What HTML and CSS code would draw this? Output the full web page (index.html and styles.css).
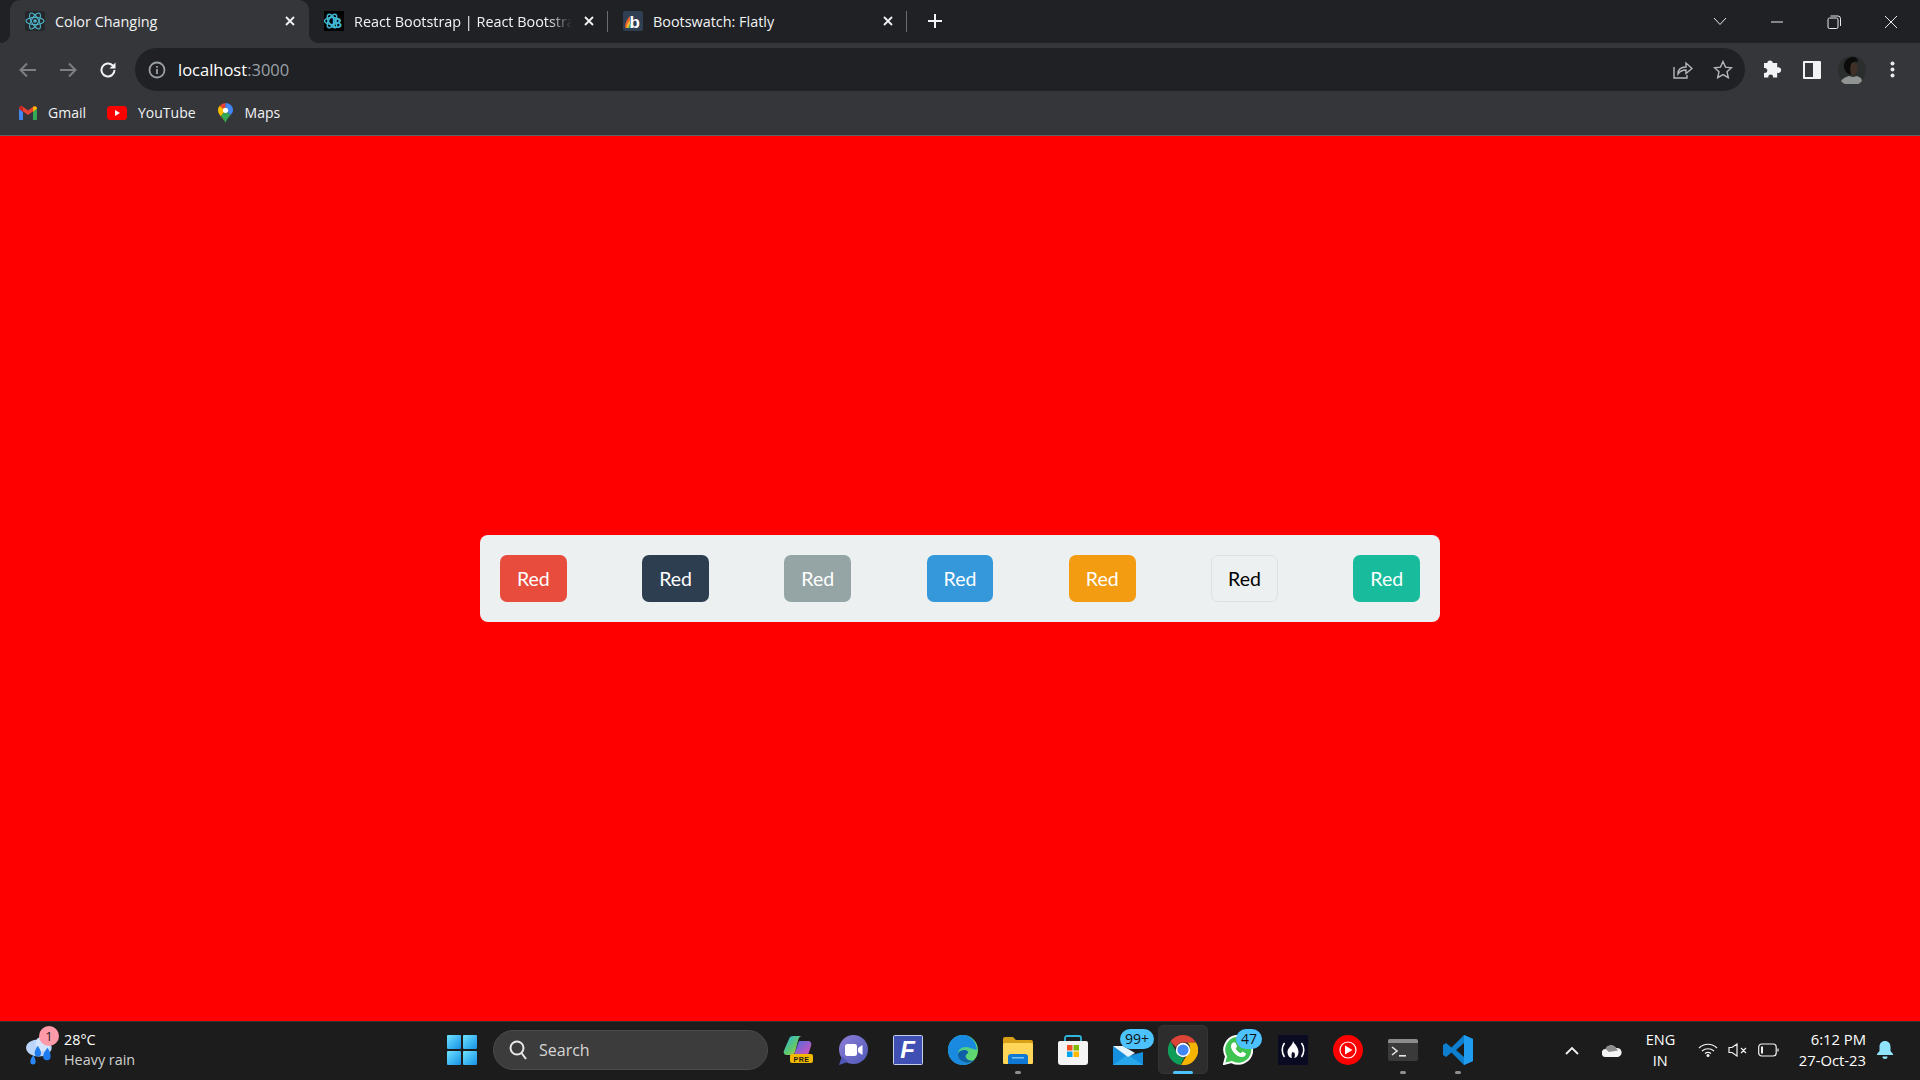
FILE: index.html
```html
<!DOCTYPE html>
<html>
<head>
<meta charset="utf-8">
<title>Color Changing</title>
<link rel="stylesheet" href="styles.css">
</head>
<body>

<!-- browser chrome -->
<header class="chrome">
  <div class="tabstrip">
    <div class="tab active">
      <svg class="favicon" viewBox="0 0 20 20"><rect width="20" height="20" rx="2" fill="#25282b"/><g fill="none" stroke="#4fb3c8" stroke-width="1.1"><ellipse cx="10" cy="10" rx="9" ry="3.6"/><ellipse cx="10" cy="10" rx="9" ry="3.6" transform="rotate(60 10 10)"/><ellipse cx="10" cy="10" rx="9" ry="3.6" transform="rotate(120 10 10)"/></g><circle cx="10" cy="10" r="1.8" fill="#4fb3c8"/></svg>
      <span class="tab-title">Color Changing</span>
      <svg class="tab-close" viewBox="0 0 10 10"><path d="M1 1l8 8M9 1l-8 8"/></svg>
    </div>
    <div class="tab sep">
      <svg class="favicon" viewBox="0 0 20 20"><rect width="20" height="20" fill="#000"/><g fill="none" stroke="#41b6d2" stroke-width="1.500"><ellipse cx="8" cy="10" rx="7.500" ry="3.400"/><ellipse cx="8" cy="10" rx="7.500" ry="3.400" transform="rotate(60 8 10)"/><ellipse cx="8" cy="10" rx="7.500" ry="3.400" transform="rotate(120 8 10)"/></g><text x="8" y="16.500" class="fav-b">B</text></svg>
      <span class="tab-title fade">React Bootstrap | React Bootstrap</span>
      <svg class="tab-close" viewBox="0 0 10 10"><path d="M1 1l8 8M9 1l-8 8"/></svg>
    </div>
    <div class="tab sep">
      <svg class="favicon" viewBox="0 0 20 20"><rect width="20" height="20" rx="2.500" fill="#2f4054"/><path d="M2 16c0-4 2-8 5-11v12H4c-1 0-2 0-2-1z" fill="#e8622c"/><path d="M3.500 17c0-3 1.500-6 3.500-8v8z" fill="#f2b632"/><path d="M5.500 17c0-2 1-3.500 2.500-4.500V17z" fill="#39a85c"/><text x="6.500" y="16.500" class="fav-bw">b</text></svg>
      <span class="tab-title">Bootswatch: Flatly</span>
      <svg class="tab-close" viewBox="0 0 10 10"><path d="M1 1l8 8M9 1l-8 8"/></svg>
    </div>
    <svg class="new-tab" viewBox="0 0 14 14"><path d="M7 0v14M0 7h14"/></svg>
    <div class="win-controls">
      <svg class="win-chevron" viewBox="0 0 14 9"><path d="M1 1l6 6.5L13 1"/></svg>
      <svg class="win-btn" viewBox="0 0 14 14"><path d="M1 7h12"/></svg>
      <svg class="win-btn" viewBox="0 0 14 14"><rect x="1" y="3" width="10" height="10.5" rx="1.5"/><path d="M3.5 1H11a2.500 2.500 0 0 1 2.500 2.500V11"/></svg>
      <svg class="win-btn" viewBox="0 0 14 14"><path d="M1 1l12 12M13 1L1 13"/></svg>
    </div>
  </div>

  <div class="toolbar">
    <span class="tool-btn"><svg class="ico-dim" width="18" height="16" viewBox="0 0 18 16"><path d="M17 8H2M8 1.500L1.500 8 8 14.500"/></svg></span>
    <span class="tool-btn"><svg class="ico-dim" width="18" height="16" viewBox="0 0 18 16"><path d="M1 8h15M10 1.500L16.500 8 10 14.500"/></svg></span>
    <span class="tool-btn"><svg class="ico-light" width="18" height="18" viewBox="0 0 18 18"><path d="M15.500 9a6.500 6.500 0 1 1-2-4.700L15.500 6.500"/><path class="solid" d="M16.500 1.500v6h-6z"/></svg></span>
    <div class="omnibox">
      <svg class="ico-info" width="18" height="18" viewBox="0 0 18 18"><circle cx="9" cy="9" r="7.500"/><path d="M9 8v5M9 5v1.800"/></svg>
      <span class="url">localhost<span class="url-dim">:3000</span></span>
      <svg class="ico-grey share" width="20" height="19" viewBox="0 0 20 19"><path d="M1 7v11h13v-3"/><path d="M5 14c0-5 3-7 8-7V3l6 5.500-6 5V10c-3.500 0-6 1-8 4z"/></svg>
      <svg class="ico-grey" width="20" height="19" viewBox="0 0 20 19"><path d="M10 1.500l2.500 5.600 6 .6-4.500 4 1.300 6L10 14.600 4.700 17.700l1.300-6-4.500-4 6-.6z"/></svg>
    </div>
    <span class="tool-btn"><svg class="puzzle" width="20" height="20" viewBox="0 0 20 20"><path fill="#f1f3f4" d="M7 1.500c1.800 0 2.800 1 2.800 2.600h4.400v4.300c1.700-.4 4 .3 4 2.700s-2.300 3.200-4 2.700v4.700h-4.200c.3-1.900-.8-3-2.300-3s-2.700 1.100-2.300 3H1v-4.700c2 .4 3.300-.8 3.300-2.400S3 8.600 1 9V4.100h3.300C4.300 2.500 5.200 1.500 7 1.500z"/></svg></span>
    <span class="tool-btn"><svg width="18" height="18" viewBox="0 0 18 18"><rect width="18" height="18" rx="1" fill="#f1f3f4"/><rect x="2" y="2" width="8" height="14" fill="#35363a"/></svg></span>
    <span class="tool-btn"><svg width="28" height="28" viewBox="0 0 28 28"><circle cx="14" cy="14" r="14" fill="#2a2e2c"/><path d="M3 25c2-3 5-4 8-5l4 1 4-1 4 2 1 3a14 14 0 0 1-21 0z" fill="#8f9391"/><path d="M12 9c1-3 4-3 6-2 2 2 2 6 1 9-1 3-3 4-4 4-2-1-3-3-3-5z" fill="#3f3027"/><path d="M6 12C5 6 9 1 15 1c3 0 5 2 5 5-3-1-6 0-7 2-1 3-1 7 0 11-4-1-6-4-7-7z" fill="#0a0b0a"/></svg></span>
    <span class="tool-btn"><svg width="5" height="17" viewBox="0 0 5 17"><g fill="#e8eaed"><circle cx="2.500" cy="2.500" r="2"/><circle cx="2.500" cy="8.500" r="2"/><circle cx="2.500" cy="14.500" r="2"/></g></svg></span>
  </div>

  <div class="bookmarks">
    <span class="bookmark">
      <svg width="18" height="14" viewBox="0 0 18 14"><path d="M0 2.500V13a1 1 0 0 0 1 1h3V6z" fill="#4285f4"/><path d="M14 14h3a1 1 0 0 0 1-1V2.500L14 6z" fill="#34a853"/><path d="M0 2.500L9 9l9-6.500C18 .5 16 -.5 14.500 .5L9 4.500 3.500 .5C2 -.5 0 .5 0 2.500z" fill="#ea4335"/><path d="M14 1v5l4-3.500C18 .5 15.500 0 14 1z" fill="#fbbc04"/><path d="M0 2.500L4 6V1C2.500 0 0 .5 0 2.500z" fill="#c5221f"/></svg>
      Gmail
    </span>
    <span class="bookmark">
      <svg width="20" height="14" viewBox="0 0 20 14"><rect width="20" height="14" rx="3.500" fill="#f00"/><path d="M8 4l5 3-5 3z" fill="#fff"/></svg>
      YouTube
    </span>
    <span class="bookmark">
      <svg width="17" height="20" viewBox="0 0 15 20"><path d="M7.500 20C6.500 16 0 12.500 0 7.300 0 5.500.6 4 1.800 2.800L7.500 7.500v0L3 13c2 2.500 4 4.500 4.500 7z" fill="#fbbc04"/><path d="M7.500 20c.7-3 3-5.400 5-8L7.500 7.500 3 13c2 2.500 4 4.500 4.500 7z" fill="#34a853"/><path d="M1.800 2.800A7.400 7.400 0 0 1 7.500 0L7.500 7.500z" fill="#ea4335"/><path d="M7.500 0c4 0 7.500 3 7.500 7.300 0 1.800-1 3.200-2.500 4.700L7.500 7.500z" fill="#4285f4"/><circle cx="7.500" cy="7.300" r="2.600" fill="#fff"/></svg>
      Maps
    </span>
  </div>
</header>

<!-- the app -->
<main class="page">
  <div class="color-bar">
    <button class="btn btn-danger">Red</button>
    <button class="btn btn-primary">Red</button>
    <button class="btn btn-secondary">Red</button>
    <button class="btn btn-info">Red</button>
    <button class="btn btn-warning">Red</button>
    <button class="btn btn-light">Red</button>
    <button class="btn btn-success">Red</button>
  </div>
</main>

<!-- windows taskbar -->
<footer class="taskbar">
  <div class="weather">
    <span class="weather-icon">
      <svg width="32" height="32" viewBox="0 0 30 30"><ellipse cx="13" cy="13" rx="12" ry="8" fill="#bcd6fb"/><circle cx="17" cy="9" r="7" fill="#d5e5fd"/><path d="M12 11c2 3 3 5 3 7a3 3 0 0 1-6 0c0-2 1-4 3-7zM21 13c2 3 3 5 3 8a3.500 3.500 0 0 1-7 0c0-3 2-5 4-8z" fill="#1f7cf0"/><path d="M8 20c1 2 2 4 2 6a2.500 2.500 0 0 1-5 0c0-2 1-4 3-6z" fill="#2a86f4"/></svg>
      <span class="weather-badge">1</span>
    </span>
    <div class="weather-text">
      <div>28°C</div>
      <div class="dim">Heavy rain</div>
    </div>
  </div>

  <svg class="start" width="30" height="30" viewBox="0 0 30 30"><defs><linearGradient id="winblue" x1="0" y1="0" x2="1" y2="1"><stop offset="0" stop-color="#6fe3ff"/><stop offset="1" stop-color="#1590e6"/></linearGradient></defs><g fill="url(#winblue)"><rect width="14" height="14" rx="1"/><rect x="16" width="14" height="14" rx="1"/><rect y="16" width="14" height="14" rx="1"/><rect x="16" y="16" width="14" height="14" rx="1"/></g></svg>

  <div class="search">
    <svg width="18" height="20" viewBox="0 0 18 20"><circle cx="8" cy="8" r="6.500"/><path d="M12.500 13l4.500 6"/></svg>
    Search
  </div>

  <div class="apps">
    <span class="app">
      <svg viewBox="0 0 30 30"><defs><linearGradient id="cop" x1="0" y1="0" x2="1" y2="1"><stop offset="0" stop-color="#29b6e8"/><stop offset=".55" stop-color="#5fc86a"/><stop offset="1" stop-color="#e8c93a"/></linearGradient><linearGradient id="cop2" x1="0" y1="0" x2="1" y2="1"><stop offset="0" stop-color="#4a6fe0"/><stop offset="1" stop-color="#e050b8"/></linearGradient></defs><path d="M16 6h9c2.500 0 4 2 3 5l-3 9H11z" fill="url(#cop2)"/><path d="M6 4c.6-2 2-3 4-3h9c-1.500 0-3 1-3.500 3L12 17c-.6 2-2 3-4 3H4c-2.500 0-4-2-3-4.500z" fill="url(#cop)"/><rect x="7" y="19" width="23" height="9" rx="2" fill="#f2b800"/><text x="18.500" y="26.500" class="pre">PRE</text></svg>
    </span>
    <span class="app">
      <svg viewBox="0 0 30 30"><defs><linearGradient id="meet" x1="0" y1="0" x2="1" y2="1"><stop offset="0" stop-color="#8e7fd6"/><stop offset="1" stop-color="#4f58b8"/></linearGradient></defs><circle cx="15.500" cy="14.500" r="14.500" fill="url(#meet)"/><path d="M1 30l3-9 6 6z" fill="#4f58b8"/><rect x="7" y="9" width="12" height="12" rx="2.500" fill="#fff"/><path d="M20 13l4.500-3v10L20 17z" fill="#fff"/></svg>
    </span>
    <span class="app">
      <svg viewBox="0 0 30 30"><rect x=".5" y=".5" width="29" height="29" rx="1" fill="#3f4fb4" stroke="#c8cde8"/><text x="14.500" y="23" class="f-letter">F</text></svg>
    </span>
    <span class="app">
      <svg viewBox="0 0 30 30"><defs><linearGradient id="edge1" x1="0" y1="0" x2="1" y2="1"><stop offset="0" stop-color="#2fc0b0"/><stop offset="1" stop-color="#6fe05c"/></linearGradient></defs><circle cx="15" cy="15" r="15" fill="url(#edge1)"/><path d="M15 0C7 0 0 6 0 15c0 9 7 15 15 15 4 0 7-1 9-3-5 2-13 0-14-6-1-6 3-9 8-9 3 0 6 2 11 3 0-4-4-15-14-15z" fill="#1a8ae0"/><path d="M10 21c1 6 9 8 14 6 1-.500 2-1 3-2-2 1-6 1-8-1-2-2-2-4 0-5 2-1 1-4-2-4-4 0-8 2-7 6z" fill="#0e5ea8"/></svg>
    </span>
    <span class="app running">
      <svg viewBox="0 0 30 28"><path d="M0 3a2 2 0 0 1 2-2h8l3 3h15a2 2 0 0 1 2 2v20a2 2 0 0 1-2 2H2a2 2 0 0 1-2-2z" fill="#d9a015"/><rect y="7" width="30" height="21" rx="1.500" fill="#ffd657"/><path d="M5 28v-7a3 3 0 0 1 3-3h14a3 3 0 0 1 3 3v7z" fill="#0f78d4"/><rect x="9" y="21" width="12" height="1.500" fill="#7cc4f5"/></svg>
    </span>
    <span class="app">
      <svg viewBox="0 0 30 30"><path d="M7 7V3a2 2 0 0 1 2-2h12a2 2 0 0 1 2 2v4" fill="none" stroke="#2fb6dc" stroke-width="1.800"/><path d="M0 8a2 2 0 0 1 2-2h26a2 2 0 0 1 2 2v19a3 3 0 0 1-3 3H3a3 3 0 0 1-3-3z" fill="#f4f4f4"/><rect x="9" y="10" width="5.500" height="5.500" fill="#f25022"/><rect x="15.500" y="10" width="5.500" height="5.500" fill="#7fba00"/><rect x="9" y="16.500" width="5.500" height="5.500" fill="#00a4ef"/><rect x="15.500" y="16.500" width="5.500" height="5.500" fill="#ffb900"/></svg>
    </span>
    <span class="app">
      <svg class="mail" viewBox="0 0 30 19"><path d="M0 0l15 10L30 6v13H0z" fill="#1490df"/><path d="M0 19l13-9 4 0 13 9z" fill="#28a8ea"/><path d="M0 0h10l12 7-7 4z" fill="#e8f4fc"/></svg>
      <span class="count count-mail">99+</span>
    </span>
    <span class="app active">
      <svg viewBox="0 0 30 30"><path d="M15 0a15 15 0 0 1 13 7.500H15a7.500 7.500 0 0 0-7 4.700L2.500 6.500A15 15 0 0 1 15 0z" fill="#db4437"/><path d="M2.500 6.500L9 18a7 7 0 0 0 7.500 4.300L12.500 30A15 15 0 0 1 2.500 6.500z" fill="#0f9d58"/><path d="M28 7.500A15 15 0 0 1 13 30l6.500-11a7.500 7.500 0 0 0 0-11.500z" fill="#f4b400"/><circle cx="15" cy="15" r="7.200" fill="#fff"/><circle cx="15" cy="15" r="5.600" fill="#4285f4"/></svg>
    </span>
    <span class="app">
      <svg viewBox="0 0 30 30"><path d="M1 29l2-7.500A14 14 0 1 1 8.500 27z" fill="#3fc351" stroke="#fff" stroke-width="2"/><path d="M10.500 7.500c-1 0-2.500 1.500-2.500 4 0 4 5.500 10.500 11 10.500 2.500 0 4-1.800 4-3.500l-3.500-2-1.800 1.800c-2-.5-4.500-3-5-5l1.500-1.800-1.800-4z" fill="#fff"/></svg>
      <span class="count count-wa">47</span>
    </span>
    <span class="app">
      <svg viewBox="0 0 30 30"><rect width="30" height="30" fill="#0a0a23"/><path d="M6.500 8c-3 4-3 10 0 14M23.500 8c3 4 3 10 0 14" fill="none" stroke="#fff" stroke-width="1.600"/><path d="M15 6c1 3 5.500 5.500 5.500 11 0 3-2 6-4.500 6 1-1.500 1.500-3.500 0-6-1 1-1.500 1-1.500-.5-1 1.500-1.500 4-.5 6.500-2.500 0-4.500-3-4.500-6 0-4.500 5.500-6.500 5.500-11z" fill="#fff"/></svg>
    </span>
    <span class="app">
      <svg viewBox="0 0 30 30"><circle cx="15" cy="15" r="15" fill="#f00"/><circle cx="15" cy="15" r="8" fill="none" stroke="#fff" stroke-width="1.200"/><path d="M12 10.500l7.500 4.500-7.500 4.500z" fill="#fff"/></svg>
    </span>
    <span class="app running">
      <svg viewBox="0 0 30 22"><rect width="30" height="22" rx="2" fill="#3a3a3a"/><path d="M0 2a2 2 0 0 1 2-2h26a2 2 0 0 1 2 2v2H0z" fill="#8c8c8c"/><path d="M4 8l5 4-5 4" fill="none" stroke="#e6e6e6" stroke-width="1.600"/><rect x="11" y="16" width="7" height="1.600" fill="#e6e6e6"/></svg>
    </span>
    <span class="app running">
      <svg viewBox="0 0 30 30"><path d="M21 0l9 4v22l-9 4L8.500 17.500 3 22l-3-2V10l3-2 5.500 4.500zM21 8l-8 7 8 7z" fill="#0e7fcf" fill-rule="evenodd"/><path d="M21 0l9 4v22l-9 4V22V8z" fill="#1f9cf0"/></svg>
    </span>
  </div>

  <div class="tray">
    <svg class="tray-up" width="14" height="9" viewBox="0 0 14 9"><path d="M1 8l6-6 6 6"/></svg>
    <svg class="tray-cloud" width="20" height="13" viewBox="0 0 20 13"><path d="M4 13a4 4 0 0 1-.5-8A6 6 0 0 1 14 4a4.500 4.500 0 0 1 2 9z" fill="#f4f4f4"/><path d="M3.500 5A6 6 0 0 1 14 4l2 2.500L7 8z" fill="#8d8d8d"/></svg>
    <div class="lang">ENG<br>IN</div>
    <svg class="tray-line" width="20" height="14" viewBox="0 0 20 14"><path d="M1 5c5-5 13-5 18 0M4 8c3.500-3 8.500-3 12 0M7 10.500c2-1.500 4-1.500 6 0"/><circle class="solid" cx="10" cy="12.500" r="1.500"/></svg>
    <svg class="tray-line" width="20" height="14" viewBox="0 0 20 14"><path d="M1 4.500h3L9 1v12L4 9.500H1zM13 5l5 5M18 5l-5 5"/></svg>
    <svg class="tray-line" width="21" height="14" viewBox="0 0 21 14"><rect x=".7" y="1" width="17.500" height="12" rx="3"/><rect class="solid" x="3" y="3.500" width="2" height="7"/><path d="M20 5.500v3"/></svg>
    <div class="clock">6:12 PM<br>27-Oct-23</div>
    <svg width="16" height="18" viewBox="0 0 16 18"><path d="M8 0c3.500 0 5.500 2.500 5.500 6v4l2.500 3v1H0v-1l2.500-3V6C2.500 2.500 4.500 0 8 0z" fill="#8fe4fb"/><path d="M5.500 15.500h5a2.500 2.500 0 0 1-5 0z" fill="#8fe4fb"/></svg>
  </div>
</footer>

</body>
</html>
```

FILE: styles.css
```css
html, body {
  margin: 0;
  height: 100%;
}

body {
  display: flex;
  flex-direction: column;
  height: 1080px;
  overflow: hidden;
  font-family: "Open Sans", "Noto Sans", sans-serif;
  background: #f00;
}

/* ---- tab strip ---- */
.tabstrip {
  display: flex;
  align-items: center;
  height: 43px;
  padding-left: 10px;
  background: #202124;
}

.tab {
  position: relative;
  display: flex;
  align-items: center;
  box-sizing: border-box;
  width: 299px;
  height: 43px;
  padding: 0 14px 1px 15px;
  color: #f1f3f4;
  font-size: 14.400px;
}

.tab.active {
  background: #35363a;
  border-radius: 10px 10px 0 0;
}

/* flared foot of the active tab */
.tab.active:before,
.tab.active:after {
  content: "";
  position: absolute;
  bottom: 0;
  width: 10px;
  height: 10px;
}

.tab.active:before {
  left: -10px;
  background: radial-gradient(circle at 0 0, #202124 10px, #35363a 10.5px);
}

.tab.active:after {
  right: -10px;
  background: radial-gradient(circle at 100% 0, #202124 10px, #35363a 10.5px);
}

.tab.sep:after {
  content: "";
  position: absolute;
  right: 0;
  top: 11px;
  height: 21px;
  width: 1px;
  background: #6b6d70;
}

.favicon {
  flex: none;
  width: 20px;
  height: 20px;
  margin-right: 10px;
}

.fav-b {
  font: bold 14px "Liberation Sans", sans-serif;
  fill: #41b6d2;
}

.fav-bw {
  font: bold 17px "Liberation Sans", sans-serif;
  fill: #fff;
}

.tab-title {
  flex: 1;
  overflow: hidden;
  white-space: nowrap;
}

.tab-title.fade {
  -webkit-mask-image: linear-gradient(to right, #000 calc(100% - 24px), transparent);
  mask-image: linear-gradient(to right, #000 calc(100% - 24px), transparent);
}

.tab-close {
  flex: none;
  width: 10px;
  height: 10px;
  margin-left: 12px;
  fill: none;
  stroke: #f1f3f4;
  stroke-width: 1.8;
}

.new-tab {
  width: 14px;
  height: 14px;
  margin: 0 0 2px 21px;
  fill: none;
  stroke: #f1f3f4;
  stroke-width: 2;
}

.win-controls {
  display: flex;
  align-items: center;
  margin-left: auto;
  padding-right: 22px;
  height: 36px;
}

.win-controls svg {
  fill: none;
  stroke: #e8eaed;
  stroke-width: 1;
}

.win-chevron {
  width: 14px;
  height: 9px;
  margin-right: 44px;
  position: relative;
  left: 1px;
}

.win-btn {
  width: 14px;
  height: 14px;
  margin-left: 43px;
}

.win-chevron + .win-btn {
  margin-left: 0;
}

/* ---- toolbar ---- */
.toolbar {
  display: flex;
  align-items: flex-start;
  height: 48px;
  box-sizing: border-box;
  padding: 5px 8px 0;
  background: #35363a;
}

.tool-btn {
  display: flex;
  align-items: center;
  justify-content: center;
  flex: none;
  width: 40px;
  height: 43px;
}

.puzzle {
  margin-left: 2px;
  margin-top: -2px;
}

.ico-dim {
  fill: none;
  stroke: #7d7f83;
  stroke-width: 2;
}

.ico-light {
  fill: none;
  stroke: #f1f3f4;
  stroke-width: 2;
}

.ico-light .solid {
  fill: #f1f3f4;
  stroke: none;
}

.omnibox {
  flex: 1;
  display: flex;
  align-items: center;
  height: 43px;
  margin: 0 7px;
  padding: 0 12px 0 13px;
  background: #202124;
  border-radius: 22px;
}

.ico-info {
  fill: none;
  stroke: #9aa0a6;
  stroke-width: 1.800;
}

.url {
  margin-left: 12px;
  color: #fff;
  font-size: 16.500px;
}

.url-dim {
  color: #9aa0a6;
}

.ico-grey {
  fill: none;
  stroke: #b5b8bb;
  stroke-width: 1.400;
}

.share {
  margin-left: auto;
  margin-right: 20px;
}

/* ---- bookmarks ---- */
.bookmarks {
  display: flex;
  align-items: center;
  gap: 21px;
  height: 45px;
  box-sizing: border-box;
  padding: 0 0 1px 19px;
  background: #35363a;
  border-bottom: 1px solid #5f6064;
}

.bookmark {
  display: flex;
  align-items: center;
  gap: 11px;
  color: #f1f3f4;
  font-size: 14px;
}

/* ---- page ---- */
.page {
  flex: 1;
  display: flex;
  align-items: center;
  justify-content: center;
  background: #f00;
}

.color-bar {
  display: flex;
  justify-content: space-between;
  box-sizing: border-box;
  width: 960px;
  padding: 20px;
  background: #ecf0f1;
  border-radius: 8px;
}

.btn {
  box-sizing: border-box;
  width: 66.600px;
  height: 47px;
  padding: 0;
  border: 1px solid transparent;
  border-radius: 7px;
  color: #fff;
  font-family: Lato, sans-serif;
  font-size: 19.500px;
}

.btn-danger { background: #e74c3c; }
.btn-primary { background: #2c3e50; }
.btn-secondary { background: #95a5a6; }
.btn-info { background: #3498db; }
.btn-warning { background: #f39c12; }
.btn-light { background: #ecf0f1; color: #000; border-color: #dde1e3; }
.btn-success { background: #18bc9c; }

/* ---- taskbar ---- */
.taskbar {
  display: flex;
  align-items: center;
  box-sizing: border-box;
  height: 59px;
  padding-bottom: 2px;
  background: #1c1c1c;
  border-top: 1px solid #333;
  color: #fff;
  font-size: 15px;
}

.weather {
  display: flex;
  align-items: center;
  box-sizing: border-box;
  width: 447px;
  padding-left: 25px;
}

.weather-icon {
  position: relative;
  width: 30px;
  height: 32px;
  margin-right: 9px;
}

.weather-badge {
  position: absolute;
  left: 14px;
  top: -8px;
  width: 20px;
  height: 20px;
  border-radius: 50%;
  background: #ff9aa8;
  color: #1c1c1c;
  font-size: 13px;
  line-height: 20px;
  text-align: center;
}

.weather-text {
  font-size: 14.400px;
  line-height: 20px;
}

.dim {
  color: #cfcfcf;
}

.start {
  flex: none;
}

.search {
  display: flex;
  align-items: center;
  gap: 12px;
  box-sizing: border-box;
  width: 275px;
  height: 40px;
  margin: 0 15px 0 16px;
  padding-left: 15px;
  background: #3c3c3c;
  border: 1px solid #4a4a4a;
  border-radius: 20px;
  color: #d6d6d6;
  font-size: 16px;
}

.search svg {
  fill: none;
  stroke: #e8e8e8;
  stroke-width: 2;
}

.apps {
  display: flex;
  gap: 25px;
}

.app {
  position: relative;
  display: flex;
  align-items: center;
  width: 30px;
  height: 30px;
}

.app svg {
  width: 30px;
  display: block;
}

.app .mail {
  margin-top: 10px;
}

.app.running:after,
.app.active:after {
  content: "";
  position: absolute;
  left: 50%;
  top: 36px;
  width: 6px;
  height: 3px;
  margin-left: -3px;
  border-radius: 2px;
  background: #8f8f8f;
}

.app.active:after {
  width: 20px;
  margin-left: -10px;
  background: #4cc2ff;
}

/* hover box behind the open app */
.app.active:before {
  content: "";
  position: absolute;
  left: -10px;
  top: -10px;
  width: 50px;
  height: 49px;
  border-radius: 5px;
  background: #2d2d2d;
  border: 1px solid #333;
  box-sizing: border-box;
}

.app.active svg {
  position: relative;
}

.count {
  position: absolute;
  top: -6px;
  height: 20px;
  border-radius: 10px;
  background: #4cc2ff;
  color: #111;
  font-size: 14px;
  line-height: 20px;
  text-align: center;
}

.count-mail {
  left: 7px;
  width: 34px;
  z-index: 1;
}

.count-wa {
  left: 13px;
  width: 26px;
}

.pre {
  font: bold 7px "Liberation Sans", sans-serif;
  fill: #1c1c1c;
  text-anchor: middle;
  letter-spacing: .5px;
}

.f-letter {
  font: italic bold 24px "Liberation Sans", sans-serif;
  fill: #fff;
  text-anchor: middle;
}

.tray {
  display: flex;
  align-items: center;
  margin-left: auto;
  padding-right: 27px;
}

.tray-up {
  fill: none;
  stroke: #f2f2f2;
  stroke-width: 1.800;
  margin-right: 23px;
}

.tray-cloud {
  margin-right: 24px;
}

.lang {
  width: 29px;
  margin-right: 23px;
  font-size: 14.500px;
  line-height: 21px;
  text-align: center;
}

.tray-line {
  fill: none;
  stroke: #f2f2f2;
  stroke-width: 1.200;
  margin-right: 10px;
}

.tray-line .solid {
  fill: #f2f2f2;
  stroke: none;
}

.clock {
  margin: 0 11px 0 10px;
  font-size: 14.800px;
  line-height: 21px;
  text-align: right;
}
```
